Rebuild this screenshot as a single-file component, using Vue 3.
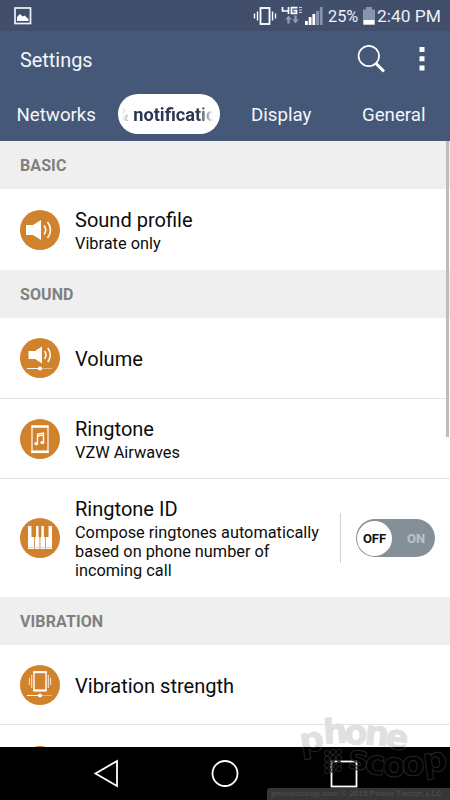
<script setup>
const signal = [4, 8, 11, 14, 18]
const watermark = [
  { c: 'p', x: 301, y: 753, r: -8 },
  { c: 'h', x: 324, y: 744, r: -4 },
  { c: 'o', x: 344, y: 744, r: 1 },
  { c: 'n', x: 364, y: 744, r: 5 },
  { c: 'e', x: 384, y: 747, r: 9 },
  { c: 's', x: 347, y: 768, r: 8 },
  { c: 'c', x: 364, y: 773, r: 7 },
  { c: 'o', x: 382, y: 776, r: 2 },
  { c: 'o', x: 402, y: 776, r: -4 },
  { c: 'p', x: 424, y: 773, r: -7 },
]
const dots = [[0, 1], [6, 0], [12, 0], [0, 7], [6, 6], [12, 6], [0, 13], [6, 12], [12, 12], [0, 19], [6, 18], [12, 17]]
</script>

<template>
  <div class="screen">
    <div class="status">
      <svg class="pic" width="18" height="18" viewBox="0 0 18 18"><rect x="1" y="1" width="15.5" height="15.5" fill="none" stroke="#eef1f7" stroke-width="1.700" /><path d="M3 14V10l3-3 2.500 2.500L10.500 8.500l4 3.500v2z" fill="#fff" /></svg>
      <svg class="vib" width="24" height="20" viewBox="0 0 24 20"><rect x="7.500" y="2" width="9" height="16" fill="none" stroke="#fff" stroke-width="1.800" /><path d="M4.500 5.500v9M1.500 7.500v5M19.500 5.500v9M22.500 7.500v5" stroke="#fff" stroke-width="1.400" /></svg>
      <svg class="lte" width="22" height="20" viewBox="0 0 22 20"><path d="M1.500 1v4H8M7.500 1v7M16.500 1.700h-6v5.600h5V4.700h-3" fill="none" stroke="#fff" stroke-width="1.700" /><path d="M18 1.500h3M18 4h3M18 6.500h3" stroke="#cbd1de" stroke-width="1.200" /><path d="M7.500 9.500l3.300 4H8.700V17.500H6.300v-4H4.200zM14.500 17.500l3.300-4h-2.100v-4h-2.400v4h-2.100z" fill="#8f9ab1" /></svg>
      <svg class="sig" width="18" height="18" viewBox="0 0 18 18"><rect v-for="(h, i) in signal" :key="i" :x="i * 3.700" :y="18 - h" width="2.800" :height="h" :fill="i < 3 ? '#fff' : '#8995ae'" /></svg>
      <span class="pct">25%</span>
      <svg class="bat" width="12" height="18" viewBox="0 0 12 18"><path d="M3 0h6v2.500h3V18H0V2.500h3z" fill="#8995ae" /><path d="M.5 13h11v4.500H.5z" fill="#fff" /></svg>
      <span class="clock">2:40 PM</span>
    </div>

    <header class="bar">
      <div class="titlebar">
        <h1>Settings</h1>
        <svg class="search" width="30" height="30" viewBox="0 0 30 30"><circle cx="11.800" cy="11" r="10.200" fill="none" stroke="#fff" stroke-width="1.700" /><path d="M18.500 18l8.500 8.500" stroke="#fff" stroke-width="3" /></svg>
        <svg class="more" width="6" height="26" viewBox="0 0 6 26"><path d="M.5 0h5v5h-5zM.5 9.200h5v5h-5zM.5 18.400h5v5h-5z" fill="#fff" /></svg>
      </div>
      <nav class="tabs">
        <span class="tab">Networks</span>
        <span class="tab"><b class="pill"><span class="marquee">&amp; notificatio</span></b></span>
        <span class="tab">Display</span>
        <span class="tab">General</span>
      </nav>
    </header>

    <main class="list">
      <h2>BASIC</h2>
      <div class="row first">
        <svg class="icon" viewBox="0 0 40 40"><circle cx="20" cy="20" r="20" fill="#d1822c" /><path d="M6 15h7l8-5v20l-8-5H6z" fill="#fff" /><path d="M24 15.500q3.500 4.500 0 9M27.500 12q6 8 0 16" fill="none" stroke="#fff" stroke-width="1.600" /></svg>
        <div class="text"><div class="name">Sound profile</div><div class="sub">Vibrate only</div></div>
      </div>
      <h2>SOUND</h2>
      <div class="row line volume">
        <svg class="icon" viewBox="0 0 40 40"><circle cx="20" cy="20" r="20" fill="#d1822c" /><path d="M8.500 13H15l7-4.500v17L15 21H8.500z" fill="#fff" /><path d="M24.500 13q3 4 0 8M27.800 10q5 7 0 14" fill="none" stroke="#fff" stroke-width="1.500" /><path d="M7 30.500h12" stroke="#fff" /><path d="M21 30.500h11" stroke="#e4b781" /><circle cx="20" cy="30.500" r="2.100" fill="#fff" /></svg>
        <div class="text"><div class="name">Volume</div></div>
      </div>
      <div class="row line">
        <svg class="icon" viewBox="0 0 40 40"><circle cx="20" cy="20" r="20" fill="#d1822c" /><rect x="12" y="7" width="16" height="26.500" fill="none" stroke="#fff" stroke-width="1.200" /><path d="M11.500 6.500h17v2.200h-17zM11.500 31.500h17v2.500h-17z" fill="#fff" /><path d="M17.500 24.500V15l6-1v9.500M17.500 17l6-1" fill="none" stroke="#fff" stroke-width="1.400" /><ellipse cx="16.300" cy="24.700" rx="2" ry="1.600" fill="#fff" /><ellipse cx="22.300" cy="23.500" rx="2" ry="1.600" fill="#fff" /></svg>
        <div class="text"><div class="name">Ringtone</div><div class="sub">VZW Airwaves</div></div>
      </div>
      <div class="row tall">
        <svg class="icon" viewBox="0 0 40 40"><circle cx="20" cy="20" r="20" fill="#d1822c" /><path d="M8 8h3.500v11H14v12H8zM14.800 19h1.200V8h2.500v11h1v12h-4.700zM20.400 19h1V8h2.500v11h1.300v12h-4.800zM26 19h2.500V8H32v23h-6z" fill="#fff" /><path d="M8 29.500h24" stroke="#edcca5" stroke-width=".8" /></svg>
        <div class="text wide"><div class="name">Ringtone ID</div><div class="sub">Compose ringtones automatically<br>based on phone number of<br>incoming call</div></div>
        <div class="switchbox"><div class="switch"><span class="knob">OFF</span><span class="on">ON</span></div></div>
      </div>
      <h2>VIBRATION</h2>
      <div class="row line strength">
        <svg class="icon" viewBox="0 0 40 40"><circle cx="20" cy="20" r="20" fill="#d1822c" /><rect x="14" y="7" width="12" height="18.500" fill="none" stroke="#fff" stroke-width="1.400" /><path d="M13.500 6.200h13v2h-13zM13.500 24.500h13v2h-13z" fill="#fff" /><path d="M11.700 10v13M9.500 13v7M28.300 10v13M30.500 13v7" stroke="#f6dfc5" stroke-width="1.200" /><path d="M7 30.500h12" stroke="#fff" /><path d="M21 30.500h11" stroke="#e4b781" /><circle cx="20" cy="30.500" r="2.100" fill="#fff" /></svg>
        <div class="text"><div class="name">Vibration strength</div></div>
      </div>
      <div class="row next"><svg class="icon" viewBox="0 0 40 40"><circle cx="20" cy="20" r="20" fill="#d1822c" /></svg></div>
      <i class="scroll"></i>
    </main>

    <footer class="nav">
      <svg width="450" height="53" viewBox="0 0 450 53" fill="none" stroke="#fff" stroke-width="1.800"><path d="M117 14v25L95.500 26.500z" /><circle cx="225" cy="26.500" r="12.500" /><rect x="331.500" y="14.500" width="25" height="25" /></svg>
    </footer>

    <svg class="mark" width="450" height="800" viewBox="0 0 450 800">
      <defs>
        <clipPath id="above"><rect width="450" height="747" /></clipPath>
        <clipPath id="below"><rect y="747" width="450" height="53" /></clipPath>
      </defs>
      <g v-for="part in ['above', 'below']" :key="part" :class="part" :clip-path="`url(#${part})`">
        <text v-for="(l, i) in watermark" :key="i" :x="l.x" :y="l.y" :transform="`rotate(${l.r} ${l.x} ${l.y})`">{{ l.c }}</text>
        <circle v-for="(d, i) in dots" :key="'d' + i" :cx="327 + d[0]" :cy="752 + d[1]" r="2.600" />
      </g>
    </svg>
    <div class="credit">phonescoop.com © 2015 Phone Factor, LLC</div>
  </div>
</template>

<style>
body { margin: 0; }
</style>

<style scoped>
.screen { position: relative; width: 450px; height: 800px; overflow: hidden; display: flex; flex-direction: column; background: #fff; font-family: Roboto, "Liberation Sans", sans-serif; }
.status { box-sizing: border-box; height: 31px; flex: none; display: flex; align-items: center; padding: 1px 9px 0 14px; background: #414f6d; color: #edf0f6; white-space: nowrap; }
.vib { margin-left: auto; }
.lte { margin-left: 4px; }
.sig { margin-left: 2px; }
.pct { margin-left: 5px; font-size: 16.300px; width: 30px; }
.bat { margin-left: 5px; }
.clock { margin-left: 2px; width: 64px; font-size: 17.400px; }
.bar { height: 110px; flex: none; background: #465878; color: #f3f6fb; }
.titlebar { height: 57px; display: flex; align-items: center; padding: 0 25px 0 20px; }
h1 { margin: 0; flex: 1; font-size: 19.900px; font-weight: 400; padding-top: 2px; }
.search { margin-right: 32px; }
.tabs { height: 53px; display: grid; grid-template-columns: repeat(4, 112.500px); }
.tab { display: flex; align-items: center; justify-content: center; font-size: 18.700px; }
.pill { width: 102px; height: 40px; margin-bottom: 2px; border-radius: 20px; background: #fff; color: #2c3852; display: flex; align-items: center; font-size: 18.200px; font-weight: 700; }
.marquee { width: 101px; padding-top: 2px; white-space: nowrap; text-indent: -1px; -webkit-mask-image: linear-gradient(90deg, transparent 4px, rgba(0,0,0,.3) 9px, rgba(0,0,0,.35) 12px, #000 16px, #000 80px, rgba(0,0,0,.4) 90px, transparent 95px); mask-image: linear-gradient(90deg, transparent 4px, rgba(0,0,0,.3) 9px, rgba(0,0,0,.35) 12px, #000 16px, #000 80px, rgba(0,0,0,.4) 90px, transparent 95px); }
.list { position: relative; flex: none; height: 606px; overflow: hidden; }
h2 { margin: 0; height: 48px; display: flex; align-items: center; box-sizing: border-box; padding: 0 0 0 20px; background: #efefef; color: #808080; font-size: 16px; font-weight: 700; letter-spacing: .1px; }
.row { box-sizing: border-box; height: 80px; display: flex; align-items: center; padding-left: 20px; color: #0c0c0c; }
.line { border-bottom: 1px solid #e3e3e3; }
.first { height: 81px; }
.volume { height: 81px; }
.tall { height: 118px; }
.icon { width: 40px; height: 40px; flex: none; }
.text { margin-left: 15px; padding-top: 2px; white-space: nowrap; }
.name { font-size: 20.050px; line-height: 24px; }
.sub { font-size: 16.320px; line-height: 19px; margin-top: 2px; }
.wide { width: 265px; padding-top: 0; }
.wide .sub { margin-top: 2px; }
.switchbox { height: 50px; border-left: 1px solid #d2d2d2; padding-left: 15px; display: flex; align-items: center; }
.switch { width: 79px; height: 38px; border-radius: 19px; background: #839097; display: flex; align-items: center; box-sizing: border-box; padding-left: 1px; font-size: 13px; font-weight: 700; }
.knob { width: 35px; height: 35px; border-radius: 50%; background: #fff; color: #111; display: flex; align-items: center; justify-content: center; }
.on { margin-left: 15px; color: #bcc4c8; }
.next { align-items: flex-start; padding-top: 20.500px; }
.scroll { position: absolute; right: 1px; top: 0; width: 3px; height: 296px; background: #bdbdbd; }
.nav { height: 53px; flex: none; background: #000; }
.nav svg { display: block; }
.mark { position: absolute; left: 0; top: 0; pointer-events: none; }
.mark text { font: bold 34px "DejaVu Sans", sans-serif; }
.above { fill: #e0e0e0; stroke: #e0e0e0; stroke-width: .8; }
.below { fill: #000; fill-opacity: .4; stroke: #242424; stroke-width: 1; }
.credit { position: absolute; left: 267px; top: 788px; width: 183px; height: 12px; box-sizing: border-box; padding-left: 4px; border-radius: 3px 0 0 0; background: #363636; color: #4b4b4b; font: bold 8px/12px "Liberation Sans", sans-serif; letter-spacing: .1px; white-space: nowrap; }
</style>
